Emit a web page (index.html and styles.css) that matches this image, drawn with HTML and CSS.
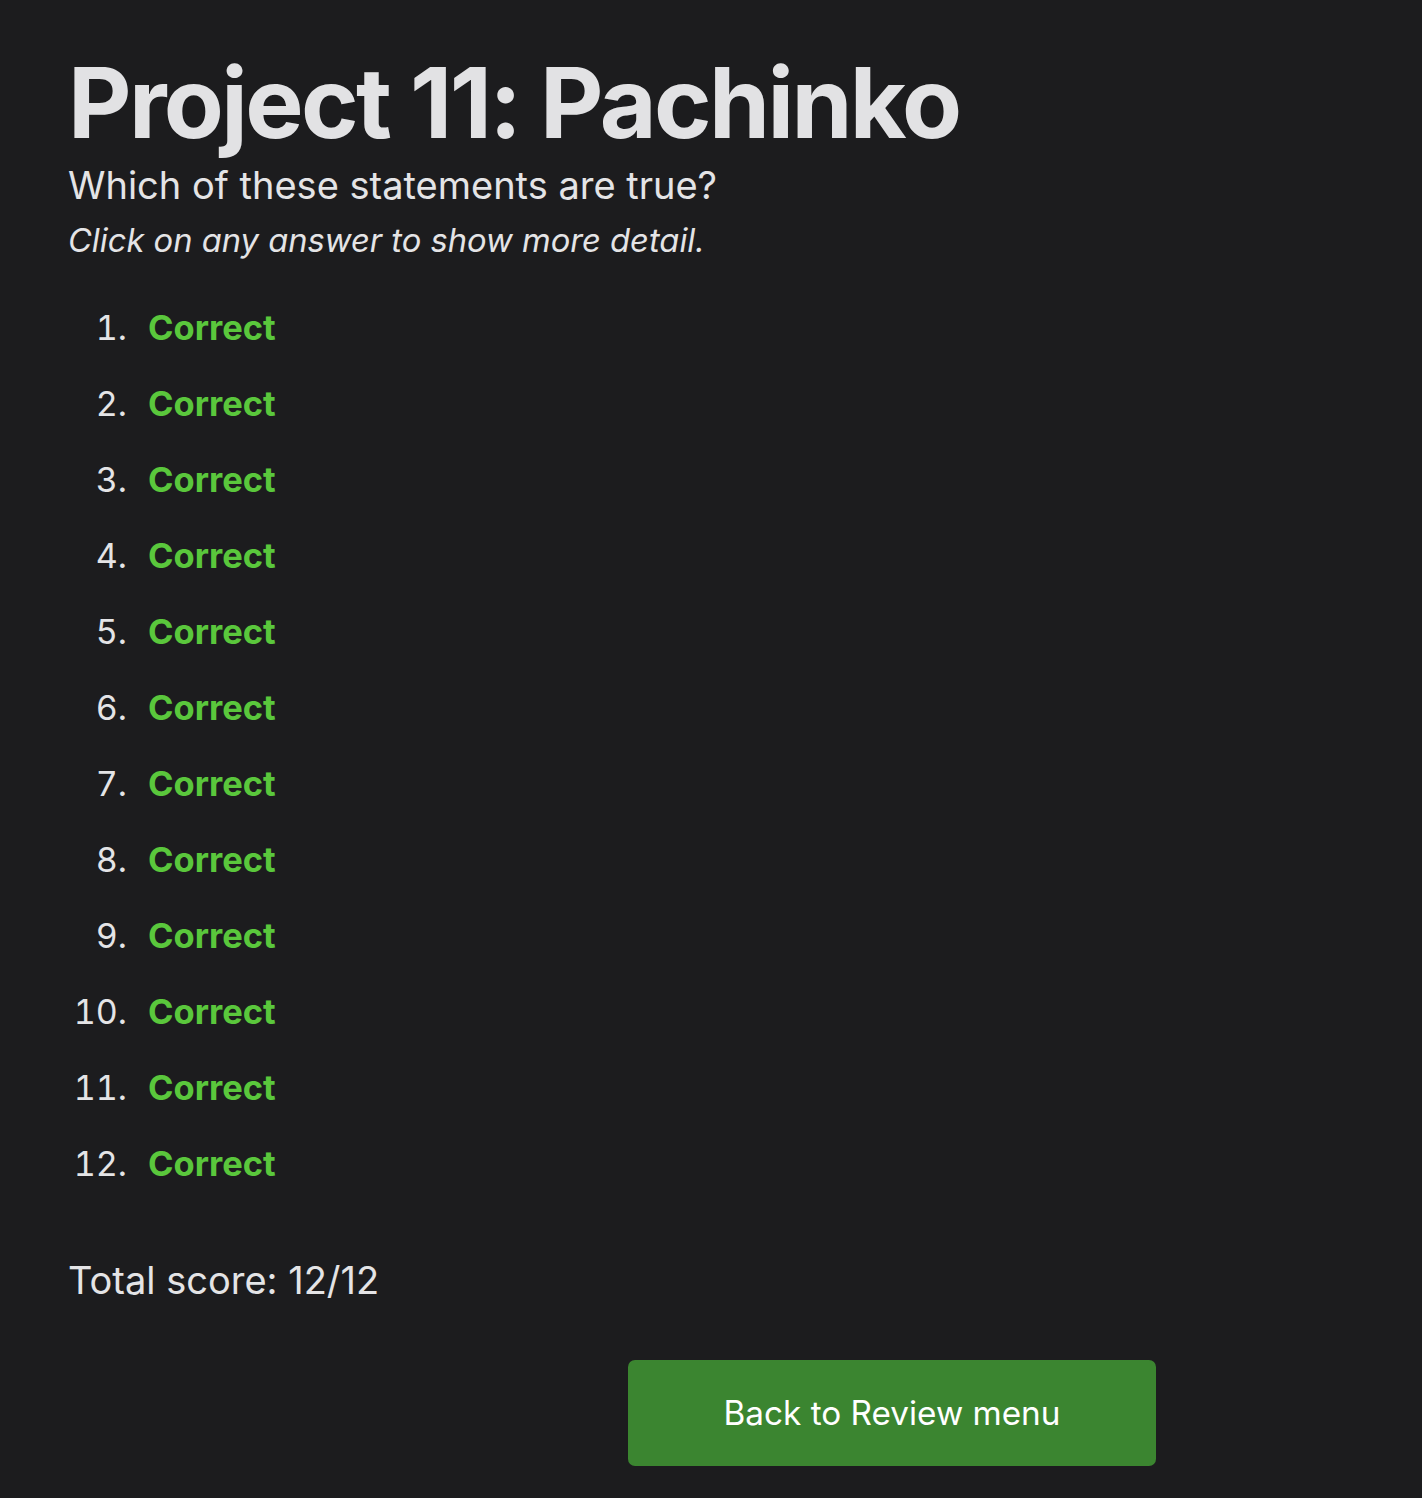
FILE: index.html
```html
<!DOCTYPE html>
<html>
<head>
<meta charset="utf-8">
<link rel="stylesheet" href="styles.css">
</head>
<body>
<main class="page">
  <h1 class="title">Project 11: Pachinko</h1>
  <p class="question">Which of these statements are true?</p>
  <p class="hint">Click on any answer to show more detail.</p>
  <ol class="answers">
    <li><span class="correct">Correct</span></li>
    <li><span class="correct">Correct</span></li>
    <li><span class="correct">Correct</span></li>
    <li><span class="correct">Correct</span></li>
    <li><span class="correct">Correct</span></li>
    <li><span class="correct">Correct</span></li>
    <li><span class="correct">Correct</span></li>
    <li><span class="correct">Correct</span></li>
    <li><span class="correct">Correct</span></li>
    <li><span class="correct">Correct</span></li>
    <li><span class="correct">Correct</span></li>
    <li><span class="correct">Correct</span></li>
  </ol>
  <p class="total">Total score: 12/12</p>
  <div class="actions">
    <button class="back-btn">Back to Review menu</button>
  </div>
</main>
</body>
</html>
```
FILE: styles.css
```css
html, body {
  margin: 0;
  padding: 0;
  background: #1c1c1e;
}
body {
  font-family: Inter, "Noto Sans", sans-serif;
  color: #e4e4e6;
}
.page {
  padding: 48px 68px 40px 68px;
}
.title {
  margin: 0;
  font-size: 98px;
  font-weight: 700;
  letter-spacing: -2.6px;
  line-height: 110px;
  color: #e2e2e4;
}
.question {
  margin: 0;
  font-size: 38px;
  line-height: 54px;
}
.hint {
  margin: 0;
  font-size: 32.7px;
  font-style: italic;
  line-height: 56px;
}
.answers {
  margin: 22px 0 0 0;
  padding: 0;
  list-style: none;
  counter-reset: item;
  font-size: 34.5px;
}
.answers li {
  counter-increment: item;
  display: flex;
  align-items: center;
  gap: 21px;
  height: 76px;
  line-height: 60px;
}
.answers li::before {
  content: counter(item) ".";
  width: 59px;
  text-align: right;
  color: #e4e4e6;
  font-size: 34px;
  font-variant-numeric: tabular-nums;
}
.correct {
  color: #5ac73c;
  font-weight: 700;
}
.total {
  margin: 53px 0 0 0;
  font-size: 38px;
  line-height: 50px;
}
.actions {
  margin-top: 55px;
  padding-left: 560px;
}
.back-btn {
  width: 528px;
  height: 106px;
  background: #3b8530;
  border: none;
  border-radius: 7px;
  color: #ffffff;
  font-family: Inter, "Noto Sans", sans-serif;
  font-size: 33.3px;
}
```
